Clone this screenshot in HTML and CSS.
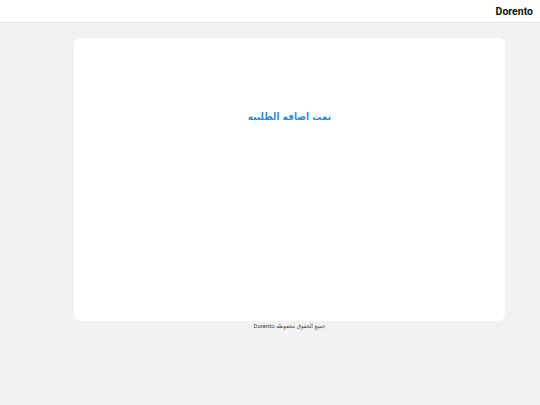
FILE: index.html
```html
<!DOCTYPE html>
<html lang="ar" dir="rtl">
<head>
<meta charset="utf-8">
<link rel="stylesheet" href="styles.css">
</head>
<body>
<header class="topbar">
  <div class="brand" dir="ltr">Dorento</div>
</header>
<main class="page">
  <section class="card">
    <h1 class="title">تمت اضافه الطلبيه</h1>
  </section>
  <footer class="footer">جميع الحقوق محفوظه Dorento</footer>
</main>
</body>
</html>
```
FILE: styles.css
```css
html, body {
  margin: 0;
  padding: 0;
}
body {
  background: #f2f2f2;
  font-family: Roboto, "Liberation Sans", "DejaVu Sans", sans-serif;
  width: 540px;
  height: 405px;
  overflow: hidden;
}
.topbar {
  height: 23px;
  background: #ffffff;
  border-bottom: 1px solid #e6e6e6;
  box-sizing: border-box;
  display: flex;
  align-items: center;
  padding-right: 7px;
}
.brand {
  font-size: 10.5px;
  font-weight: 700;
  color: #111;
}
.page {
  display: flex;
  flex-direction: column;
  padding: 15px 35px 0 74px;
}
.card {
  background: #ffffff;
  border-radius: 7px;
  height: 283px;
  box-sizing: border-box;
  padding-top: 73px;
}
.title {
  margin: 0;
  text-align: center;
  font-size: 10px;
  font-weight: 700;
  color: #2b8fd8;
  font-family: "DejaVu Sans Condensed", "DejaVu Sans", sans-serif;
}
.footer {
  text-align: center;
  font-size: 6px;
  color: #444;
  padding-top: 1px;
  font-family: Roboto, "DejaVu Sans Condensed", "DejaVu Sans", sans-serif;
}
```
